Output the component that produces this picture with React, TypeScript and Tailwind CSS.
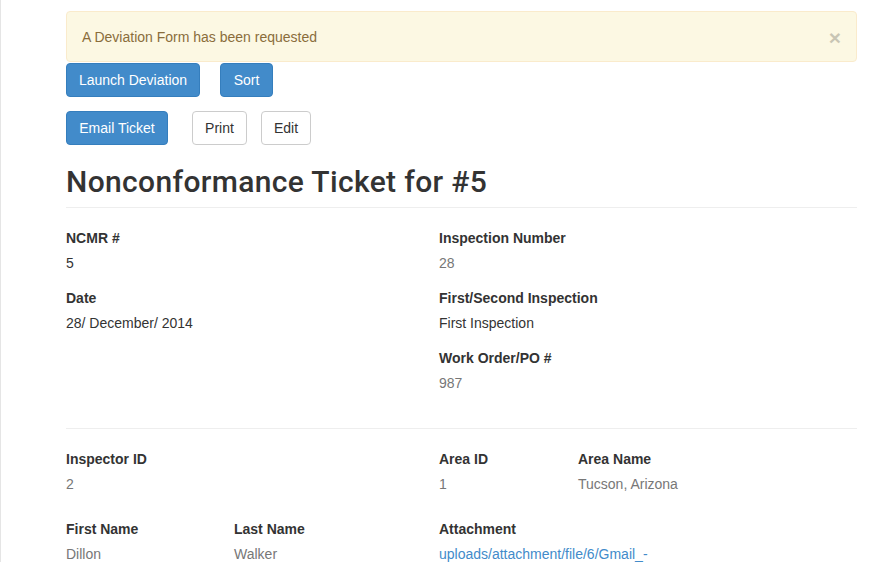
import React from 'react';

type Field = { label: string; value: string; muted?: boolean; link?: boolean };

const Item = ({ field, className = '' }: { field: Field; className?: string }) => (
  <div className={className}>
    <div className="h-5 font-bold leading-5 text-[#333]">{field.label}</div>
    <div
      className={
        'mt-[5px] h-5 leading-5 ' +
        (field.link ? 'text-[#428bca]' : field.muted ? 'text-[#777]' : 'text-[#333]')
      }
    >
      {field.value}
    </div>
  </div>
);

const BlueButton = ({ children, w }: { children: React.ReactNode; w: string }) => (
  <button className={`${w} h-[34px] rounded border border-[#357ebd] bg-[#428bca] text-center leading-5 text-white`}>
    {children}
  </button>
);

const PlainButton = ({ children, w }: { children: React.ReactNode; w: string }) => (
  <button className={`${w} h-[34px] rounded border border-[#ccc] bg-white text-center leading-5 text-[#333]`}>
    {children}
  </button>
);

export default function App() {
  return (
    <div
      className="min-h-screen border-l border-[#e5e5e5] bg-white pt-[11px] pl-[65px] pr-[34px] text-[14px] text-[#333]"
      style={{ fontFamily: '"Liberation Sans", Arial, sans-serif' }}
    >
      {/* Alert */}
      <div className="flex h-[51px] items-center justify-between rounded border border-[#faebcc] bg-[#fcf8e3] pl-[15px] pr-[15px] pt-px text-[#8a6d3b]">
        <span>A Deviation Form has been requested</span>
        <span className="text-[21px] font-bold leading-none text-black opacity-20">×</span>
      </div>

      {/* Actions */}
      <div className="mt-px flex gap-5">
        <BlueButton w="w-[134px]">Launch Deviation</BlueButton>
        <BlueButton w="w-[53px]">Sort</BlueButton>
      </div>
      <div className="mt-[14px] flex">
        <BlueButton w="w-[102px]">Email Ticket</BlueButton>
        <div className="ml-6">
          <PlainButton w="w-[55px]">Print</PlainButton>
        </div>
        <div className="ml-[14px]">
          <PlainButton w="w-[50px]">Edit</PlainButton>
        </div>
      </div>

      {/* Title */}
      <div className="mt-5 border-b border-[#eee] pb-[9px]">
        <h1 className="font-['Roboto',sans-serif] text-[30px] font-medium leading-[33px] tracking-[0.35px] text-[#333]">
          Nonconformance Ticket for #5
        </h1>
      </div>

      {/* Ticket details */}
      <div className="grid grid-cols-[373px_1fr] pt-[20px]">
        <div>
          <Item className="mb-[15px]" field={{ label: 'NCMR #', value: '5' }} />
          <Item className="mb-[15px]" field={{ label: 'Date', value: '28/ December/ 2014' }} />
        </div>
        <div>
          <Item className="mb-[15px]" field={{ label: 'Inspection Number', value: '28', muted: true }} />
          <Item className="mb-[15px]" field={{ label: 'First/Second Inspection', value: 'First Inspection' }} />
          <Item className="mb-[15px]" field={{ label: 'Work Order/PO #', value: '987', muted: true }} />
        </div>
      </div>

      <div className="mt-5 border-t border-[#eee] pt-[20px]">
        <div className="grid grid-cols-[373px_1fr]">
          <Item field={{ label: 'Inspector ID', value: '2', muted: true }} />
          <div className="grid grid-cols-[139px_1fr]">
            <Item field={{ label: 'Area ID', value: '1', muted: true }} />
            <Item field={{ label: 'Area Name', value: 'Tucson, Arizona', muted: true }} />
          </div>
        </div>
        <div className="mt-[25px] grid grid-cols-[373px_1fr]">
          <div className="grid grid-cols-[168px_1fr]">
            <Item field={{ label: 'First Name', value: 'Dillon', muted: true }} />
            <Item field={{ label: 'Last Name', value: 'Walker', muted: true }} />
          </div>
          <Item field={{ label: 'Attachment', value: 'uploads/attachment/file/6/Gmail_-', link: true }} />
        </div>
      </div>
    </div>
  );
}
